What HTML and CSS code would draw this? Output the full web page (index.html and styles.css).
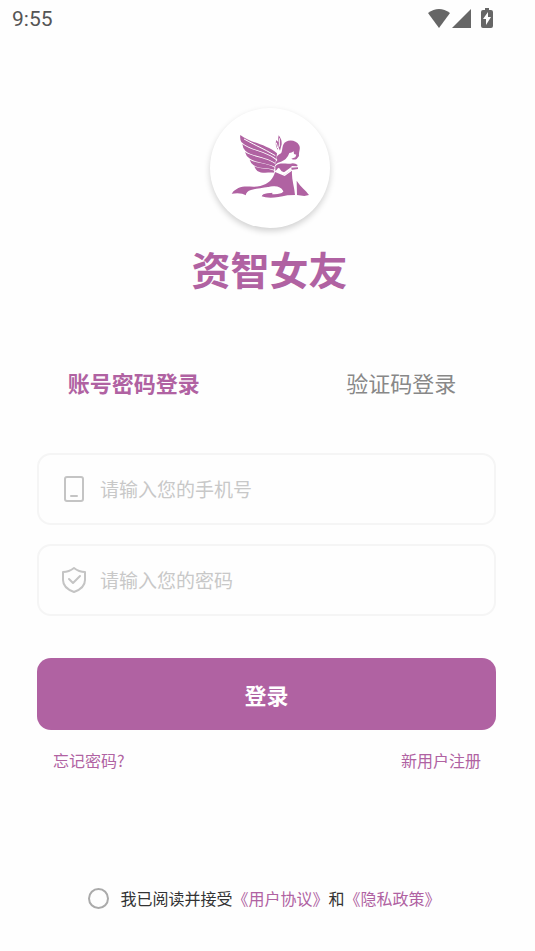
FILE: index.html
```html
<!DOCTYPE html>
<html lang="zh-CN">
<head>
    <meta charset="UTF-8">
    <meta name="viewport" content="width=device-width, initial-scale=1.0">
    <title>资智女友</title>
    <link rel="stylesheet" href="styles.css">
</head>
<body>
    <header class="status-bar">
        <span class="time">9:55</span>
        <div class="status-icons">
            <svg width="22" height="19" viewBox="0 0 22 19"><path d="M0 4Q11-4 22 4L11 19Z"/></svg>
            <svg width="19" height="19" viewBox="0 0 19 19"><path d="M19 0V19H0Z"/></svg>
            <svg class="battery" width="12" height="20" viewBox="0 0 12 20">
                <path d="M4 0H8V2H10Q12 2 12 4V18Q12 20 10 20H2Q0 20 0 18V4Q0 2 2 2H4Z"/>
                <path class="bolt" d="M7 4L2 11H5V17L10 9H7Z"/>
            </svg>
        </div>
    </header>

    <main>
        <div class="brand">
            <div class="logo">
                <svg width="90" height="76" viewBox="0 0 270 228">
                    <!-- wings -->
                    <path d="M46 21C72 44 125 48 156 76L154 93C125 69 75 67 49 42Q44 33 46 21Z"/>
                    <path d="M52 48C80 69 125 72 153 96L151 105C121 86 82 86 61 68Q53 60 52 48Z"/>
                    <path d="M60 72C86 89 126 88 151 108L149 116C120 103 91 104 73 91Q63 84 60 72Z"/>
                    <path d="M74 95C98 108 125 104 149 119L147 125C122 118 101 122 85 111Q77 105 74 95Z"/>
                    <path d="M88 115C106 124 125 119 148 128L146 134C126 133 109 137 97 129Q91 124 88 115Z"/>
                    <path class="feather" d="M57 33Q88 50 105 58T151 83"/>
                    <path d="M161 22Q171 34 170 49L165 68Q160 60 160 51L158 66Q149 48 154 36L160 43Q158 34 161 22Z"/>
                    <path class="feather" d="M163 31V56M154 44L158 60"/>
                    <!-- hair and face -->
                    <path d="M183 41C196 34 215 38 222 51C228 62 221 69 222 84L215 93Q207 97 199 92L211 88L214 80L207 78L206 70Q200 75 193 75Q190 85 182 93C171 103 160 101 150 111Q151 101 157 96C151 89 157 82 168 76C174 68 169 48 183 41Z"/>
                    <!-- arms and dress -->
                    <path d="M151 115C163 102 180 109 196 107Q209 104 218 111L216 115L201 114L196 119L219 118V123L197 126L178 140L165 133L160 121L151 129Z"/>
                    <path class="arm" d="M159 121L167 132L177 137L199 121"/>
                    <path d="M150 132L179 144L201 128C199 153 208 176 210 201L187 202C153 211 124 211 110 205Q112 198 127 196L163 193Q172 188 162 181C144 170 118 180 94 182L78 186Q64 190 62 202Q50 193 20 197Q26 187 40 180C61 171 82 180 106 174C130 168 145 153 150 132Z"/>
                    <path class="arm" d="M128 181Q162 172 171 190Q166 196 142 195"/>
                    <path d="M215 158C228 178 243 187 252 201L238 204L216 201Z"/>
                </svg>
            </div>
            <h1>资智女友</h1>
        </div>

        <nav class="tabs">
            <button type="button" class="tab active">账号密码登录</button>
            <button type="button" class="tab">验证码登录</button>
        </nav>

        <form class="login-form">
            <div class="field">
                <label for="phone" aria-label="手机号">
                    <svg class="line-icon" width="26" height="28" viewBox="0 0 26 28"><rect x="4" y="2" width="18" height="24" rx="2"/><path d="M10 21H16"/></svg>
                </label>
                <input type="tel" id="phone" name="phone" placeholder="请输入您的手机号">
            </div>
            <div class="field">
                <label for="password" aria-label="密码">
                    <svg class="line-icon" width="26" height="28" viewBox="0 0 26 28"><path d="M13 2Q18 6 24 6V14Q24 22 13 26Q2 22 2 14V6Q8 6 13 2Z"/><path d="M8 13L12 17L19 10"/></svg>
                </label>
                <input type="password" id="password" name="password" placeholder="请输入您的密码">
            </div>
            <button type="submit" class="submit">登录</button>
            <div class="links">
                <a href="#">忘记密码?</a>
                <a href="#">新用户注册</a>
            </div>
            <div class="agreement">
                <input type="checkbox" id="agree" name="agree">
                <label for="agree">我已阅读并接受<a href="#">《用户协议》</a>和<a href="#">《隐私政策》</a></label>
            </div>
        </form>
    </main>
</body>
</html>
```
FILE: styles.css
```css
* {
    box-sizing: border-box;
}

body {
    margin: 0;
    background: #fefefe;
    color: #333;
    font-family: "Noto Sans CJK SC", sans-serif;
    font-size: 16px;
    line-height: 24px;
}

button, input {
    font-family: inherit;
}

a {
    color: #b062a2;
    text-decoration: none;
}

.status-bar {
    display: flex;
    align-items: center;
    justify-content: space-between;
    height: 36px;
    padding: 0 42px 0 12px;
}

.time {
    padding-top: 2px;
    font-family: Roboto, sans-serif;
    font-size: 21px;
    font-weight: 400;
    color: #555;
}

.status-icons {
    display: flex;
    align-items: center;
    gap: 2px;
    fill: #666;
}

.battery {
    margin-left: 8px;
}

.bolt {
    fill: #fff;
}

.brand {
    display: flex;
    flex-direction: column;
    align-items: center;
    padding-top: 72px;
    padding-left: 4px;
}

.logo {
    display: flex;
    justify-content: center;
    width: 120px;
    height: 120px;
    padding-top: 20px;
    border-radius: 50%;
    background: #fff;
    box-shadow: 0 3px 6px rgba(0, 0, 0, 0.18);
    fill: #b062a2;
}

.feather {
    fill: none;
    stroke: #fff;
    stroke-width: 3;
}

.arm {
    fill: none;
    stroke: #fff;
    stroke-width: 7;
}

h1 {
    margin: 16px 0 0;
    color: #b062a2;
    font-size: 39px;
    font-weight: 700;
    line-height: 48px;
}

.tabs {
    display: grid;
    grid-template-columns: 1fr 1fr;
    margin-top: 70px;
}

.tab {
    height: 40px;
    padding: 0;
    border: none;
    background: none;
    color: #888;
    font-size: 22px;
    cursor: pointer;
}

.tab.active {
    color: #b062a2;
    font-weight: 700;
}

.login-form {
    padding: 51px 39px 20px 37px;
}

.field {
    display: flex;
    align-items: center;
    gap: 13px;
    height: 72px;
    margin-bottom: 19px;
    padding: 0 22px;
    border: 2px solid #f5f5f5;
    border-radius: 14px;
}

.field label {
    display: flex;
}

.line-icon {
    fill: none;
    stroke: #c4c4c4;
    stroke-width: 2;
    stroke-linecap: round;
    stroke-linejoin: round;
}

.field input {
    flex: 1;
    min-width: 0;
    padding: 0 0 2px;
    border: none;
    outline: none;
    background: none;
    font-size: 19px;
}

.field input::placeholder {
    color: #c8c8c8;
}

.submit {
    width: 100%;
    height: 72px;
    margin-top: 23px;
    border: none;
    border-radius: 14px;
    background: #b062a2;
    color: #fff;
    font-size: 22px;
    font-weight: 700;
    cursor: pointer;
}

.links {
    display: flex;
    justify-content: space-between;
    margin-top: 18px;
    padding: 0 15px 0 16px;
}

.agreement {
    display: flex;
    align-items: center;
    justify-content: center;
    gap: 11px;
    margin-top: 114px;
    padding-right: 4px;
}

.agreement input {
    appearance: none;
    width: 21px;
    height: 21px;
    margin: 0;
    border: 2px solid #aaa;
    border-radius: 50%;
}

.agreement input:checked {
    background: #b062a2;
}
```
